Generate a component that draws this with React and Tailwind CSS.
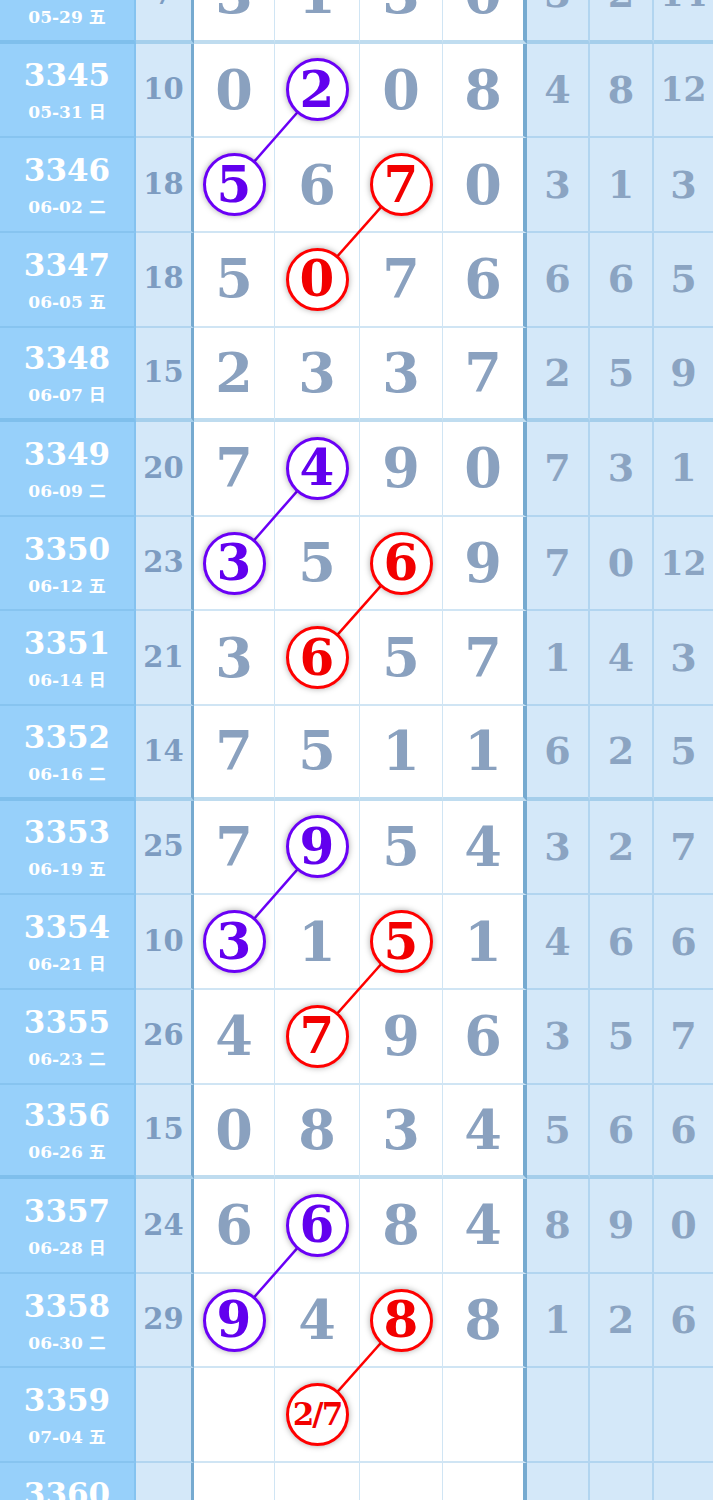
import React from "react";

const H = 94.64;

const rows = [
  { id: "3344", date: "05-29", wd: "五", sum: "7", d: ["3", "1", "3", "0"], r: ["3", "2", "14"] },
  { id: "3345", date: "05-31", wd: "日", sum: "10", d: ["0", "2", "0", "8"], r: ["4", "8", "12"], c: { 1: "p" } },
  { id: "3346", date: "06-02", wd: "二", sum: "18", d: ["5", "6", "7", "0"], r: ["3", "1", "3"], c: { 0: "p", 2: "r" } },
  { id: "3347", date: "06-05", wd: "五", sum: "18", d: ["5", "0", "7", "6"], r: ["6", "6", "5"], c: { 1: "r" } },
  { id: "3348", date: "06-07", wd: "日", sum: "15", d: ["2", "3", "3", "7"], r: ["2", "5", "9"] },
  { id: "3349", date: "06-09", wd: "二", sum: "20", d: ["7", "4", "9", "0"], r: ["7", "3", "1"], c: { 1: "p" } },
  { id: "3350", date: "06-12", wd: "五", sum: "23", d: ["3", "5", "6", "9"], r: ["7", "0", "12"], c: { 0: "p", 2: "r" } },
  { id: "3351", date: "06-14", wd: "日", sum: "21", d: ["3", "6", "5", "7"], r: ["1", "4", "3"], c: { 1: "r" } },
  { id: "3352", date: "06-16", wd: "二", sum: "14", d: ["7", "5", "1", "1"], r: ["6", "2", "5"] },
  { id: "3353", date: "06-19", wd: "五", sum: "25", d: ["7", "9", "5", "4"], r: ["3", "2", "7"], c: { 1: "p" } },
  { id: "3354", date: "06-21", wd: "日", sum: "10", d: ["3", "1", "5", "1"], r: ["4", "6", "6"], c: { 0: "p", 2: "r" } },
  { id: "3355", date: "06-23", wd: "二", sum: "26", d: ["4", "7", "9", "6"], r: ["3", "5", "7"], c: { 1: "r" } },
  { id: "3356", date: "06-26", wd: "五", sum: "15", d: ["0", "8", "3", "4"], r: ["5", "6", "6"] },
  { id: "3357", date: "06-28", wd: "日", sum: "24", d: ["6", "6", "8", "4"], r: ["8", "9", "0"], c: { 1: "p" } },
  { id: "3358", date: "06-30", wd: "二", sum: "29", d: ["9", "4", "8", "8"], r: ["1", "2", "6"], c: { 0: "p", 2: "r" } },
  { id: "3359", date: "07-04", wd: "五", sum: "", d: ["", "2/7", "", ""], r: ["", "", ""], c: { 1: "r" } },
  { id: "3360", date: "07-06", wd: "日", sum: "", d: ["", "", "", ""], r: ["", "", ""] },
];

const digitCenters = [234, 317, 401, 483];

function centerY(i) {
  const bw = i % 4 === 0 ? 4 : 2;
  return i * H + (H - bw) / 2;
}

function Circle({ kind, value }) {
  const purple = kind === "p";
  const small = value.length > 1;
  return (
    <div
      className={
        "relative z-20 flex h-[63px] w-[63px] items-center justify-center rounded-full border-[3px] bg-white font-bold shadow-[0_0_6px_rgba(0,0,0,0.35)] " +
        (purple ? "border-[#6a00f6] text-[#6200ee] " : "border-[#ff0000] text-[#f20000] ") +
        (small ? "text-[31px] tracking-[-2px]" : "text-[50px]")
      }
    >
      <span className="leading-none">{value}</span>
    </div>
  );
}

export default function App() {
  const lines = [];
  rows.forEach((row, i) => {
    if (row.c && row.c[1] === "p" && rows[i + 1] && rows[i + 1].c && rows[i + 1].c[0] === "p") {
      lines.push({ x1: digitCenters[1], y1: centerY(i), x2: digitCenters[0], y2: centerY(i + 1), color: "#6a00f6" });
    }
    if (row.c && row.c[2] === "r" && rows[i + 1] && rows[i + 1].c && rows[i + 1].c[1] === "r") {
      lines.push({ x1: digitCenters[2], y1: centerY(i), x2: digitCenters[1], y2: centerY(i + 1), color: "#ff0000" });
    }
  });

  return (
    <div className="h-[1500px] w-[713px] overflow-hidden bg-white font-['DejaVu_Serif','Noto_Sans_CJK_SC',serif]">
      <div className="relative mt-[-51px] grid grid-cols-[136px_58px_81px_85px_83px_84px_63px_64px_59px] auto-rows-[94.64px]">
        {rows.map((row, i) => {
          const thick = i % 4 === 0;
          const bb = thick
            ? "border-b-4 border-b-[rgba(90,165,215,0.38)]"
            : "border-b-2 border-b-[rgba(100,170,220,0.3)]";
          return (
            <React.Fragment key={row.id}>
              <div className={"flex flex-col items-center justify-center bg-[#97d0fa] border-r-2 border-r-[rgba(100,170,220,0.35)] text-white " + bb}>
                <div className="text-[31px] font-bold leading-[36px]">{row.id}</div>
                <div className="mt-[9px] text-[17px] font-bold leading-[20px]">
                  {row.date} {row.wd}
                </div>
              </div>
              <div className={"flex items-center justify-center bg-[#d4e8f9] border-r-[3px] border-r-[#76aad0] text-[29px] font-bold text-[#7d9cc1] " + bb}>
                {row.sum}
              </div>
              {row.d.map((v, k) => {
                const kind = row.c && row.c[k];
                const br =
                  k === 3
                    ? "border-r-4 border-r-[#76aad0]"
                    : "border-r border-r-[rgba(100,170,220,0.3)]";
                return (
                  <div
                    key={k}
                    className={"flex items-center justify-center bg-white text-[54px] font-bold text-[#8aa1bf] " + br + " " + bb}
                  >
                    {kind ? <Circle kind={kind} value={v} /> : <span className="leading-none">{v}</span>}
                  </div>
                );
              })}
              {row.r.map((v, k) => (
                <div
                  key={"r" + k}
                  className={
                    "flex items-center justify-center bg-[#d4e8f9] font-bold text-[#8ba4c2] " +
                    (v.length > 1 ? "text-[33px] " : "text-[38px] ") +
                    (k < 2 ? "border-r-2 border-r-[rgba(100,170,220,0.3)] " : "") +
                    bb
                  }
                >
                  <span className="leading-none">{v}</span>
                </div>
              ))}
            </React.Fragment>
          );
        })}
        <svg
          className="pointer-events-none absolute left-0 top-0 z-10"
          width="713"
          height={rows.length * H}
        >
          {lines.map((l, k) => (
            <line key={k} x1={l.x1} y1={l.y1} x2={l.x2} y2={l.y2} stroke={l.color} strokeWidth="2.5" />
          ))}
        </svg>
      </div>
    </div>
  );
}
